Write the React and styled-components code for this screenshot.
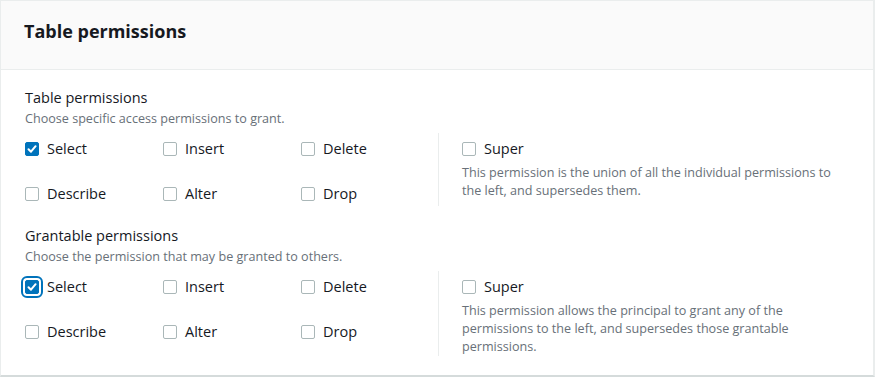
import React from "react";
import styled, { createGlobalStyle, css } from "styled-components";

const Global = createGlobalStyle`
  html, body { margin: 0; padding: 0; background: #ffffff; }
  body { font-family: "Open Sans", "Noto Sans", Arial, sans-serif; color: #16191f; }
  * { box-sizing: border-box; }
`;

const Card = styled.section`
  width: 875px;
  height: 377px;
  border: 1px solid #eaeded;
  border-right-width: 2px;
  border-bottom-width: 2px;
  border-bottom-color: #d5dbdb;
  background: #ffffff;
`;

const Header = styled.header`
  height: 69px;
  background: #fafafa;
  border-bottom: 1px solid #eaeded;
  display: flex;
  align-items: flex-start;
  padding: 19px 23px 0;
`;

const Title = styled.h2`
  margin: 0;
  font-size: 18px;
  line-height: 22px;
  font-weight: 700;
  color: #16191f;
`;

const Body = styled.div`
  padding: 18px 24px 0 24px;
  display: flex;
  flex-direction: column;
  gap: 20px;
`;

const Section = styled.div`
  display: flex;
  flex-direction: column;
`;

const Label = styled.div`
  font-size: 14.5px;
  line-height: 20px;
  color: #16191f;
`;

const Hint = styled.div`
  font-size: 12.6px;
  line-height: 16px;
  color: #687078;
  margin-top: 3px;
`;

const Row = styled.div`
  display: flex;
  margin-top: 6px;
`;

const Grid = styled.div`
  display: grid;
  grid-template-columns: 138px 138px 137px;
  grid-auto-rows: 24px;
  row-gap: 21px;
  padding-top: 4px;
  width: 414px;
  border-right: 1px solid #eaeded;
`;

const SuperCol = styled.div`
  padding-top: 4px;
  padding-left: 23px;
  width: 410px;
`;

const Option = styled.label`
  display: flex;
  align-items: center;
  gap: 8px;
  font-size: 14.5px;
  line-height: 24px;
  color: #16191f;
  cursor: pointer;
`;

const Box = styled.span`
  width: 14px;
  height: 14px;
  border-radius: 2px;
  border: 1px solid #aab7b8;
  background: #ffffff;
  flex: none;
  display: inline-flex;
  align-items: center;
  justify-content: center;
  ${(p) =>
    p.$checked &&
    css`
      border-color: #0073bb;
      background: #0073bb;
    `}
  ${(p) =>
    p.$focused &&
    css`
      outline: 2px solid #0073bb;
      outline-offset: 2px;
    `}
`;

const SuperHint = styled.div`
  font-size: 12.6px;
  line-height: 18px;
  color: #687078;
  margin-top: 3px;
  width: 382px;
`;

function Check({ checked, focused, children }) {
  return (
    <Option>
      <Box $checked={checked} $focused={focused}>
        {checked && (
          <svg width="12" height="12" viewBox="0 0 12 12">
            <polyline
              points="2.5,6.2 5,8.7 9.6,3.2"
              fill="none"
              stroke="#ffffff"
              strokeWidth="2"
              strokeLinecap="round"
              strokeLinejoin="round"
            />
          </svg>
        )}
      </Box>
      {children}
    </Option>
  );
}

const perms = ["Select", "Insert", "Delete", "Describe", "Alter", "Drop"];

function PermSection({ label, hint, superHint, focused }) {
  return (
    <Section>
      <Label>{label}</Label>
      <Hint>{hint}</Hint>
      <Row>
        <Grid>
          {perms.map((p) => (
            <Check key={p} checked={p === "Select"} focused={focused && p === "Select"}>
              {p}
            </Check>
          ))}
        </Grid>
        <SuperCol>
          <Check>Super</Check>
          <SuperHint>{superHint}</SuperHint>
        </SuperCol>
      </Row>
    </Section>
  );
}

export default function App() {
  return (
    <>
      <Global />
      <Card>
        <Header>
          <Title>Table permissions</Title>
        </Header>
        <Body>
          <PermSection
            label="Table permissions"
            hint="Choose specific access permissions to grant."
            superHint="This permission is the union of all the individual permissions to the left, and supersedes them."
          />
          <PermSection
            label="Grantable permissions"
            hint="Choose the permission that may be granted to others."
            superHint="This permission allows the principal to grant any of the permissions to the left, and supersedes those grantable permissions."
            focused
          />
        </Body>
      </Card>
    </>
  );
}
